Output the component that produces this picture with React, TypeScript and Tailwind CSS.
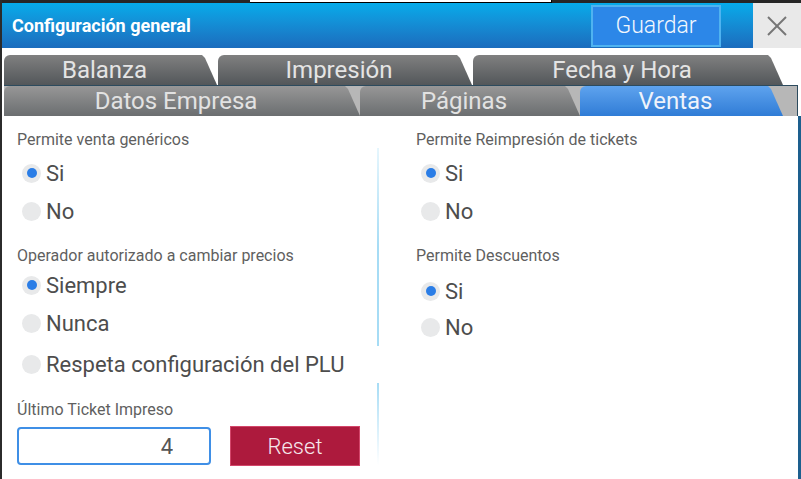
import React from 'react';

const slant = "[clip-path:polygon(0_0,calc(100%_-_15px)_0,calc(100%_-_12px)_3px,100%_100%,0_100%)]";

const Tab = ({ label, className }: { label: string; className: string }) => (
  <div className={`h-full shrink-0 rounded-tl-[6px] pr-[12px] text-center text-[24px] leading-[30px] ${slant} ${className}`}>
    {label}
  </div>
);

const Radio = ({ label, checked = false, className = "h-[38px]" }: { label: string; checked?: boolean; className?: string }) => (
  <div className={`flex items-center ${className}`}>
    <span className="ml-[5px] w-[19px] h-[19px] rounded-full bg-[#e8e9ea] flex items-center justify-center">
      {checked && <span className="w-[10px] h-[10px] rounded-full bg-[#2a7de6]" />}
    </span>
    <span className="ml-[5px] text-[22px] text-[#4d4d4d]">{label}</span>
  </div>
);

const Label = ({ children, className = "" }: { children: React.ReactNode; className?: string }) => (
  <div className={`h-[20px] leading-[20px] text-[16px] text-[#5f5f5f] ${className}`}>{children}</div>
);

export default function App() {
  return (
    <div className="w-[801px] h-[479px] overflow-hidden bg-white flex flex-col border-l-2 border-[#2b2b2b] font-['Roboto',sans-serif]">
      {/* ventana de atras */}
      <div className="h-[3px] flex shrink-0">
        <div className="w-[248px] bg-[#262626]" />
        <div className="w-[302px] bg-white border-b border-r border-black" />
        <div className="flex-1 bg-[#262626]" />
      </div>

      {/* encabezado */}
      <div className="h-[45px] flex shrink-0">
        <div className="flex-1 flex items-center justify-between pl-[10px] pr-[32px] bg-linear-to-b from-[#05abea] to-[#1b6cbd]">
          <span className="text-white font-bold text-[18px]">Configuración general</span>
          <button className="w-[130px] h-[42px] mt-[1px] bg-[#2c87e8] border-2 border-[#4fb3f0] text-[#f2f7fd] text-[23px] font-light">
            Guardar
          </button>
        </div>
        <div className="w-[48px] bg-[#e9e9e9] flex items-center justify-center">
          <svg width="20" height="20" viewBox="0 0 20 20" stroke="#767676" strokeWidth="2">
            <line x1="1" y1="1" x2="19" y2="19" />
            <line x1="19" y1="1" x2="1" y2="19" />
          </svg>
        </div>
      </div>

      {/* pestañas */}
      <div className="mt-[7px] h-[30px] flex gap-[1px] pl-[2px] shrink-0">
        <Tab label="Balanza" className="w-[213px] bg-linear-to-b from-[#808080] to-[#53575a] text-[#e4e4e4]" />
        <Tab label="Impresión" className="w-[254px] bg-linear-to-b from-[#808080] to-[#53575a] text-[#e4e4e4]" />
        <Tab label="Fecha y Hora" className="w-[310px] bg-linear-to-b from-[#808080] to-[#53575a] text-[#e4e4e4]" />
      </div>
      <div className="ml-[2px] w-[794px] h-[31px] flex bg-[#b7b7b7] border-t border-r border-[#2c4b5e] shrink-0">
        <Tab label="Datos Empresa" className="w-[356px] bg-linear-to-b from-[#979797] to-[#6b6e70] text-[#e2e2e2]" />
        <Tab label="Páginas" className="w-[220px] bg-linear-to-b from-[#979797] to-[#6b6e70] text-[#e2e2e2]" />
        <Tab label="Ventas" className="w-[203px] bg-linear-to-b from-[#5ea3ee] to-[#2f7cd6] text-[#eef3fb]" />
      </div>

      {/* contenido */}
      <div className="flex-1 flex pl-[15px] border-r-[3px] border-[#1d5f8e]">
        <div className="w-[360px] pt-[14px]">
          <Label>Permite venta genéricos</Label>
          <div className="mt-[4px]">
            <Radio label="Si" checked />
            <Radio label="No" />
          </div>
          <Label className="mt-[16px]">Operador autorizado a cambiar precios</Label>
          <Radio label="Siempre" checked />
          <Radio label="Nunca" />
          <Radio label="Respeta configuración del PLU" className="h-[38px] mt-[3px]" />
          <Label className="mt-[17px]">Último Ticket Impreso</Label>
          <div className="mt-[6px] h-[40px] flex items-center">
            <input
              readOnly
              value="4"
              className="w-[194px] h-[38px] border-2 border-[#3f8fe6] rounded-[4px] text-right pr-[36px] text-[22px] text-[#555] outline-none"
            />
            <button className="ml-[19px] w-[130px] h-[40px] bg-[#ad1a3d] border border-[#d4466a] text-[#f6e8ec] text-[22px] font-light">
              Reset
            </button>
          </div>
        </div>

        <div className="w-[2px] pt-[32px]">
          <div className="h-[198px] bg-linear-to-b from-[#e6f6fd] via-[#a6dcf5] to-[#a6dcf5]" />
          <div className="mt-[37px] h-[82px] bg-linear-to-b from-[#a6dcf5] to-[#ffffff]" />
        </div>

        <div className="flex-1 pl-[37px] pt-[14px]">
          <Label>Permite Reimpresión de tickets</Label>
          <div className="mt-[4px]">
            <Radio label="Si" checked />
            <Radio label="No" />
          </div>
          <Label className="mt-[16px]">Permite Descuentos</Label>
          <div className="mt-[7px]">
            <Radio label="Si" checked className="h-[36px]" />
            <Radio label="No" className="h-[36px]" />
          </div>
        </div>
      </div>
    </div>
  );
}
